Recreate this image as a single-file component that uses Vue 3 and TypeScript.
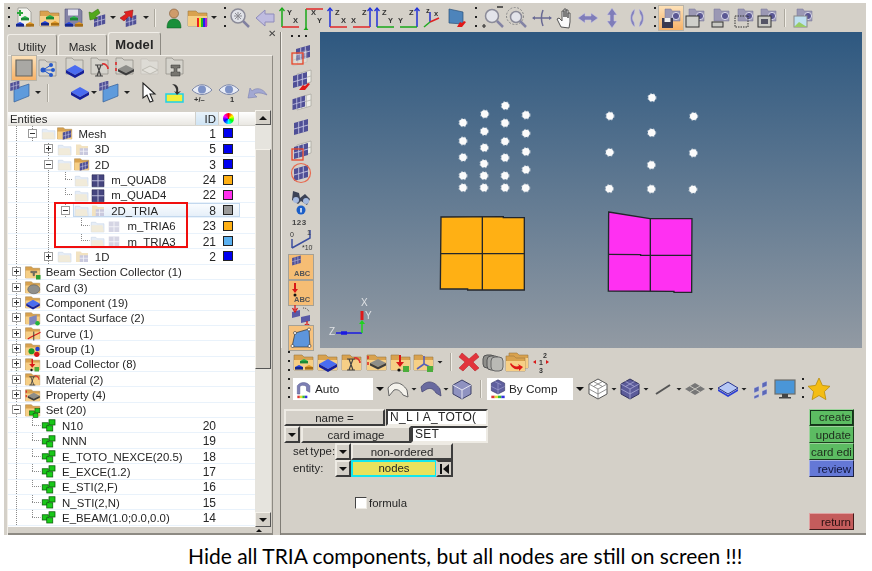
<template>
  <svg class="defs" aria-hidden="true">
    <defs>
      <g id="g-fold">
        <path d="M2 5h8l2 2h9v13H2z" fill="#d9a24e" stroke="#9c7a44" stroke-width=".6" />
        <path d="M2 10h19v10H2z" fill="#f6cf86" />
      </g>
      <g id="g-faint">
        <path d="M3 7h6l2 2h9v11H3z" fill="#e6edf6" stroke="#c3d2e6" stroke-width=".7" />
        <path d="M3 11h15l2 9H3z" fill="#f5e9cf" opacity=".7" />
      </g>
      <g id="g-cam">
        <path d="M6 3h6l1 2h8v10H6z" fill="#9b98b4" stroke="#77749a" stroke-width=".5" />
        <circle cx="17" cy="10" r="3.6" fill="#5b5894" stroke="#dbdaea" stroke-width="1" />
      </g>
      <g id="g-balls">
        <path d="M12 8l4 2-4 2-4-2z" fill="#29b34a" />
        <rect x="8" y="10" width="8" height="2.4" fill="#1b8a36" />
        <path d="M7 14l4 2-4 2-4-2z" fill="#2442d8" />
        <rect x="3" y="16" width="8" height="2.6" fill="#15288f" />
        <path d="M17 14l4 2-4 2-4-2z" fill="#e09a28" />
        <rect x="13" y="16" width="8" height="2.6" fill="#a86e14" />
      </g>
      <g id="g-grid">
        <path d="M5 8l14-4v12L5 20z" fill="#4f4f96" />
        <path d="M9.7 6.7v12M14.3 5.4v12M5 14l14-4" stroke="#c6c6e2" stroke-width=".9" fill="none" />
      </g>
      <g id="g-wire">
        <path d="M5 8l14-4v12L5 20z" fill="#efeee9" stroke="#a5a39c" stroke-width=".7" />
        <path d="M9.7 6.7v12M14.3 5.4v12M5 14l14-4" stroke="#b3b1ab" stroke-width=".8" fill="none" />
      </g>
      <g id="g-comp">
        <path d="M12 6l9 5-9 5-9-5z" fill="#4a6cf0" />
        <path d="M3 11l9 5 9-5v3l-9 5-9-5z" fill="#151f9a" />
      </g>
      <g id="g-prop">
        <path d="M13 9l8 4-8 4-8-4z" fill="#8e8e8a" />
        <path d="M5 13l8 4 8-4v2.5l-8 4-8-4z" fill="#3d3d3d" />
        <path d="M3 6v3M3 12v3" stroke="#d22" stroke-width="1.5" />
      </g>
      <g id="g-mat">
        <path d="M14 8a5 5 0 0 1 6 5" fill="none" stroke="#d33" stroke-width="1.6" />
        <path d="M7 9h8M7 20h8M9 9l4 11M13 9l-4 11" stroke="#444" stroke-width="1.2" fill="none" />
      </g>
      <g id="g-load">
        <path d="M11 5v9" stroke="#d81818" stroke-width="2" />
        <path d="M7 12h8l-4 5z" fill="#d81818" />
        <circle cx="10" cy="20" r="1.6" fill="#111" />
        <rect x="14" y="16" width="6" height="6" fill="#4cad3c" />
      </g>
      <g id="g-set">
        <rect x="3" y="9" width="8" height="7" fill="#19c719" stroke="#0a5c0a" />
        <rect x="12" y="5" width="8" height="7" fill="#19c719" stroke="#0a5c0a" />
        <rect x="9" y="13" width="8" height="7" fill="#19d019" stroke="#0a5c0a" />
      </g>

      <symbol id="new" viewBox="0 0 24 24"><path d="M5 2h9l4 4v14H5z" fill="#f4f4ef" stroke="#8a8a84" stroke-width=".7" /><path d="M4 7h6M7 4v6" stroke="#2aa83a" stroke-width="2" /><use href="#g-balls" y="2" /></symbol>
      <symbol id="open" viewBox="0 0 24 24"><use href="#g-fold" /><use href="#g-balls" y="1" /></symbol>
      <symbol id="save" viewBox="0 0 24 24"><path d="M3 3h15l2 2v15H3z" fill="#8483a6" stroke="#55547c" stroke-width=".6" /><rect x="6" y="3.500" width="10" height="6" fill="#e4e4ee" /><use href="#g-balls" y="2" /></symbol>
      <symbol id="imp" viewBox="0 0 24 24"><use href="#g-grid" transform="translate(5 5) scale(.8)" /><path d="M13 3l-6 4-3-1 1 8 8-2-3-1 5-4z" fill="#52a81c" stroke="#2f6d0c" stroke-width=".5" /></symbol>
      <symbol id="exp" viewBox="0 0 24 24"><use href="#g-grid" transform="translate(6 6) scale(.75)" /><path d="M4 12l6-4-2-2 9-2-1 8-3-2-5 5z" fill="#e02121" stroke="#8d1010" stroke-width=".5" /></symbol>
      <symbol id="user" viewBox="0 0 24 24"><circle cx="12" cy="7.500" r="4.500" fill="#cf9b6a" stroke="#7a5430" stroke-width=".6" /><path d="M5 22c0-7 3-9 7-9s7 2 7 9z" fill="#1a8f3a" stroke="#0c5a20" stroke-width=".5" /></symbol>
      <symbol id="rainb" viewBox="0 0 24 24"><use href="#g-fold" /><path d="M11 12h2v9h-2z" fill="#e22" /><path d="M13 12h2v9h-2z" fill="#ee2" /><path d="M15 12h2v9h-2z" fill="#2b2" /><path d="M17 12h2v9h-2z" fill="#22e" /><path d="M19 12h2v9h-2z" fill="#a2c" /></symbol>
      <symbol id="zwheel" viewBox="0 0 24 24"><circle cx="10" cy="10" r="7" fill="#e0e2e8" stroke="#8b8b98" stroke-width="1.500" /><path d="M15 15l6 6" stroke="#8080a0" stroke-width="2.500" /><path d="M7 7l6 6M13 7l-6 6M10 6v8M6 10h8" stroke="#8d8d94" stroke-width="1" /></symbol>
      <symbol id="larr" viewBox="0 0 24 24"><path d="M3 12l9-8v4h9v8h-9v4z" fill="#bfbce0" stroke="#8f8cba" stroke-width="1" /></symbol>
      <symbol v-for="a in axes" :id="a.id" :key="a.id" viewBox="0 0 24 24">
        <path :d="`M${a.vx} ${a.hy}V${a.vEnd}`" :stroke="a.vc" stroke-width="1.500" />
        <path :d="`M${a.vx - 2.500} ${a.vEnd + 3}L${a.vx} ${a.vEnd}L${a.vx + 2.500} ${a.vEnd + 3}`" :stroke="a.vc" stroke-width="1.200" fill="none" />
        <path :d="`M${a.vx} ${a.hy}H${a.hEnd}`" :stroke="a.hc" stroke-width="1.500" />
        <text :x="a.vx === 4 ? 9 : 12" y="9" class="ax">{{ a.vl }}</text>
        <text :x="a.vx === 4 ? 15 : 1" y="17" class="ax">{{ a.hl }}</text>
      </symbol>
      <symbol id="iso" viewBox="0 0 24 24"><path d="M9 16V6" stroke="#2430d0" stroke-width="1.500" /><path d="M9 16l9-4" stroke="#d22" stroke-width="1.500" /><path d="M9 16l-6 5" stroke="#2a2" stroke-width="1.500" /><text x="5" y="7" class="ax">z</text><text x="13" y="10" class="ax">x</text></symbol>
      <symbol id="scr" viewBox="0 0 24 24"><path d="M4 3l14 3v12L4 17z" fill="#4d84bb" stroke="#2d527a" stroke-width=".7" /><path d="M12 21l5 0 4-5-2-1-2 2-2-1z" fill="#e01818" /></symbol>
      <symbol id="zoomo" viewBox="0 0 24 24"><circle cx="11" cy="10" r="6.500" fill="#e3e4ea" stroke="#8b8b98" stroke-width="1.500" /><path d="M16 15l6 6" stroke="#8383a4" stroke-width="2.500" /><path d="M16 1h6" stroke="#333" stroke-width="1.500" /><path d="M1 20h4M3 18v4" stroke="#333" stroke-width="1.200" /></symbol>
      <symbol id="zoomd" viewBox="0 0 24 24"><circle cx="10" cy="10" r="8.500" fill="none" stroke="#888" stroke-width="1" stroke-dasharray="2 1.500" /><circle cx="11" cy="11" r="5.500" fill="#e3e4ea" stroke="#8b8b98" stroke-width="1.500" /><path d="M15 15l6 6" stroke="#8383a4" stroke-width="2.500" /></symbol>
      <symbol id="fit" viewBox="0 0 24 24"><path d="M3 12h18M13 4c-2 5-2 11 0 16" stroke="#6a6a94" stroke-width="1.500" fill="none" /><path d="M2 12l3-2v4zM22 12l-3-2v4z" fill="#6a6a94" /></symbol>
      <symbol id="hand" viewBox="0 0 24 24"><path d="M8 21l-4-8 2-1 3 3V5h2v6-8h2v8-7h2v8-5h2v9l-1 6z" fill="#fafafa" stroke="#555" stroke-width="1" stroke-linejoin="round" /></symbol>
      <symbol id="harr" viewBox="0 0 24 24"><path d="M2 12l7-5v3h6V7l7 5-7 5v-3H9v3z" fill="#7f7db9" stroke="#c9c8e2" stroke-width=".6" /></symbol>
      <symbol id="varr" viewBox="0 0 24 24"><path d="M12 2l5 7h-3v6h3l-5 7-5-7h3V9H7z" fill="#7f7db9" stroke="#c9c8e2" stroke-width=".6" /></symbol>
      <symbol id="rot" viewBox="0 0 24 24"><path d="M10 3C4 6 4 18 10 21l-1-5c-2-2-2-6 0-8zM14 3c6 3 6 15 0 18l1-5c2-2 2-6 0-8z" fill="#8280bd" stroke="#c9c8e2" stroke-width=".5" /></symbol>
      <symbol id="cam1" viewBox="0 0 24 24"><use href="#g-cam" /><rect x="3" y="12" width="11" height="10" fill="#3a3a50" /><rect x="5.500" y="12" width="6" height="4" fill="#eee" /></symbol>
      <symbol id="cam2" viewBox="0 0 24 24"><use href="#g-cam" /><rect x="3" y="10" width="13" height="11" fill="#cfcfca" stroke="#333" stroke-width="1" /></symbol>
      <symbol id="cam3" viewBox="0 0 24 24"><use href="#g-cam" /><rect x="4" y="16" width="11" height="5" fill="#c9c9c3" stroke="#333" stroke-width="1" /></symbol>
      <symbol id="cam4" viewBox="0 0 24 24"><use href="#g-cam" /><rect x="3" y="10" width="13" height="11" fill="none" stroke="#333" stroke-width="1" stroke-dasharray="1.500 1" /></symbol>
      <symbol id="cam5" viewBox="0 0 24 24"><use href="#g-cam" /><rect x="3" y="10" width="13" height="11" fill="#c9c9c3" stroke="#333" stroke-width="1" /><rect x="6" y="13" width="7" height="5" fill="#556" /></symbol>
      <symbol id="cam6" viewBox="0 0 24 24"><use href="#g-cam" /><rect x="3" y="10" width="13" height="11" fill="#bfe0f0" stroke="#888" stroke-width="1" /><path d="M3 21l5-5 8 5z" fill="#9c6" /></symbol>

      <symbol id="pfold" viewBox="0 0 24 24"><path d="M4 4h16v16H4z" fill="#a9a8a4" stroke="#66655f" stroke-width="1.200" /></symbol>
      <symbol id="pnet" viewBox="0 0 24 24"><path d="M3 4h6l2 2h9v14H3z" fill="#d5d3cc" stroke="#8c8a82" stroke-width=".7" /><path d="M7 14l8-5M7 14l9 0M7 14l8 5" stroke="#2659c9" stroke-width="1" /><circle cx="7" cy="14" r="2.500" fill="#2659c9" /><circle cx="15" cy="9" r="2" fill="#2659c9" /><circle cx="17" cy="14" r="2" fill="#2659c9" /><circle cx="15" cy="19" r="2" fill="#2659c9" /></symbol>
      <symbol id="pcomp" viewBox="0 0 24 24"><path d="M3 2h6l2 2h9v14H3z" fill="#d5d3cc" stroke="#8c8a82" stroke-width=".7" /><use href="#g-comp" y="3" /></symbol>
      <symbol id="pmat" viewBox="0 0 24 24"><path d="M3 2h6l2 2h9v14H3z" fill="#d5d3cc" stroke="#8c8a82" stroke-width=".7" /><use href="#g-mat" /></symbol>
      <symbol id="pprop" viewBox="0 0 24 24"><path d="M3 2h6l2 2h9v14H3z" fill="#d5d3cc" stroke="#8c8a82" stroke-width=".7" /><use href="#g-prop" /></symbol>
      <symbol id="pdis" viewBox="0 0 24 24"><path d="M3 3h6l2 2h9v13H3z" fill="#dddbd5" stroke="#c4c2ba" stroke-width=".7" /><path d="M12 10l8 4-8 4-8-4z" fill="#e4e2dc" stroke="#bdbbb3" /></symbol>
      <symbol id="pbeam" viewBox="0 0 24 24"><path d="M3 2h6l2 2h9v14H3z" fill="#d5d3cc" stroke="#8c8a82" stroke-width=".7" /><path d="M8 9h9v3h-3v4h3v4H8v-4h3v-4H8z" fill="#77756f" stroke="#333" stroke-width=".5" /></symbol>
      <symbol id="psheet" viewBox="0 0 24 24"><path d="M4 8l15-5v12L4 21z" fill="#5f9bdc" stroke="#345e98" stroke-width=".7" /><use href="#g-grid" transform="translate(-3 -3) scale(.65)" /></symbol>
      <symbol id="comp" viewBox="0 0 24 24"><use href="#g-comp" /></symbol>
      <symbol id="cursor" viewBox="0 0 24 24"><path d="M7 2v15l4-3 3 7 3-1-3-7h5z" fill="#fff" stroke="#222" stroke-width="1.100" /></symbol>
      <symbol id="ybox" viewBox="0 0 24 24"><rect x="3" y="13" width="17" height="8" fill="#f4ef3a" stroke="#1fd0e6" stroke-width="1.500" /><path d="M9 3c5 0 7 3 6 8l3-1-4 4-3-4 2 1c1-3-1-6-4-8z" fill="#333" /></symbol>
      <symbol id="eyep" viewBox="0 0 24 24"><path d="M2 9c6-7 14-7 20 0-6 6-14 6-20 0z" fill="#e8ecf5" stroke="#7e88a8" stroke-width="1" /><circle cx="12" cy="8.500" r="4" fill="#7d92c6" /><text x="4" y="21" class="ax">+/–</text></symbol>
      <symbol id="eye1" viewBox="0 0 24 24"><path d="M2 9c6-7 14-7 20 0-6 6-14 6-20 0z" fill="#e8ecf5" stroke="#7e88a8" stroke-width="1" /><circle cx="12" cy="8.500" r="4" fill="#7d92c6" /><text x="13" y="21" class="ax">1</text></symbol>
      <symbol id="undo" viewBox="0 0 24 24"><path d="M22 14C18 7 11 6 7 10l-2-3-2 10 9-1-3-3c4-2 8-1 13 1z" fill="#a2a8d2" stroke="#7c82b0" stroke-width=".6" /></symbol>

      <symbol id="gbox" viewBox="0 0 24 24"><use href="#g-grid" transform="translate(2 -2)" /><use href="#g-wire" opacity=".4" transform="translate(-1 3)" /><rect x="3" y="10" width="11" height="11" fill="none" stroke="#e8462a" stroke-width="1.300" /></symbol>
      <symbol id="gred" viewBox="0 0 24 24"><use href="#g-wire" transform="translate(3 -2)" /><use href="#g-grid" transform="translate(-1 0)" /><path d="M10 22l6 0 5-6-2-1-3 3-2-1z" fill="#e01818" /></symbol>
      <symbol id="gwire" viewBox="0 0 24 24"><use href="#g-wire" transform="translate(3 -1)" /><use href="#g-grid" transform="translate(-1 1) scale(.9)" /></symbol>
      <symbol id="grid" viewBox="0 0 24 24"><use href="#g-grid" /></symbol>
      <symbol id="gbox2" viewBox="0 0 24 24"><use href="#g-wire" transform="translate(3 -2)" /><use href="#g-grid" /><rect x="3" y="10" width="11" height="11" fill="none" stroke="#e8462a" stroke-width="1.300" /></symbol>
      <symbol id="gcirc" viewBox="0 0 24 24"><use href="#g-grid" /><circle cx="12" cy="12" r="9.500" fill="none" stroke="#e86a50" stroke-width="1.200" /></symbol>
      <symbol id="binoc" viewBox="0 0 24 24"><path d="M4 6l6 2 1 5 5-4 5 5-3 6-6-4-3 3-6-4z" fill="#3b4256" /><circle cx="7" cy="15" r="3" fill="#a7bbe0" /><circle cx="17" cy="16" r="3" fill="#a7bbe0" /></symbol>
      <symbol id="info" viewBox="0 0 24 24"><circle cx="12" cy="6" r="4.500" fill="#1b5ec8" /><rect x="11.300" y="4" width="1.400" height="4.500" fill="#fff" /><text x="3" y="21" class="num">123</text></symbol>
      <symbol id="angle" viewBox="0 0 24 24"><path d="M3 20L21 10V2M3 20V11" stroke="#3c4fa0" stroke-width="1.500" fill="none" /><text x="1" y="9" class="tiny">0</text><text x="18" y="7" class="tiny">1</text><text x="13" y="22" class="tiny">*10'</text></symbol>
      <symbol id="abc1" viewBox="0 0 24 24"><rect width="24" height="24" fill="#f6bd74" /><use href="#g-grid" transform="translate(0 -2) scale(.62)" /><text x="5" y="21" class="abc">ABC</text></symbol>
      <symbol id="abc2" viewBox="0 0 24 24"><rect width="24" height="24" fill="#f6bd74" /><path d="M6 2v9" stroke="#d81818" stroke-width="2" /><path d="M3 8h6l-3 4z" fill="#d81818" /><circle cx="6" cy="14" r="1.500" fill="#111" /><text x="5" y="21" class="abc">ABC</text></symbol>
      <symbol id="swap" viewBox="0 0 24 24"><path d="M3 8l8-2v6l-8 2z" fill="#5a5aa6" /><path d="M12 13l9-2v6l-9 2z" fill="#5a5aa6" /><path d="M6 1v5M3.500 4L6 8l2.500-4M18 17v6M16 20l2 3 2-3" stroke="#d81818" stroke-width="1.300" fill="none" /><path d="M14 4c3 0 5 1 6 4" stroke="#555" fill="none" stroke-dasharray="1 1" /></symbol>
      <symbol id="quad" viewBox="0 0 24 24"><rect width="24" height="24" fill="#f7c27d" /><path d="M3 21L6 7l14-4 1 18z" fill="#5d95dc" stroke="#333" stroke-width=".7" /><circle cx="6" cy="7" r="1.500" fill="#fff" stroke="#333" stroke-width=".6" /><circle cx="20" cy="3.500" r="1.500" fill="#fff" stroke="#333" stroke-width=".6" /><circle cx="3.500" cy="20" r="1.500" fill="#fff" stroke="#333" stroke-width=".6" /><circle cx="20.500" cy="20" r="1.500" fill="#fff" stroke="#333" stroke-width=".6" /></symbol>

      <symbol id="fcomp" viewBox="0 0 24 24"><use href="#g-fold" /><use href="#g-comp" y="3" /></symbol>
      <symbol id="fmat" viewBox="0 0 24 24"><use href="#g-fold" /><use href="#g-mat" /></symbol>
      <symbol id="fprop" viewBox="0 0 24 24"><use href="#g-fold" /><use href="#g-prop" /></symbol>
      <symbol id="fload" viewBox="0 0 24 24"><use href="#g-fold" /><use href="#g-load" /></symbol>
      <symbol id="faxes" viewBox="0 0 24 24"><use href="#g-fold" /><path d="M12 14V6M12 14l-7 5M12 14l6 3" stroke="#5860b8" stroke-width="1.600" /><rect x="15" y="16" width="6" height="6" fill="#4cad3c" /></symbol>
      <symbol id="xred" viewBox="0 0 24 24"><path d="M5 3l7 6 7-6 3 4-6 5 6 6-4 3-6-6-6 6-4-3 6-6-6-5z" fill="#e2343c" stroke="#b01a20" stroke-width=".5" /></symbol>
      <symbol id="cards" viewBox="0 0 24 24"><rect x="2" y="5" width="12" height="13" rx="4" fill="#8f8f8b" stroke="#555" /><rect x="6" y="6" width="12" height="14" rx="4" fill="#a9a9a5" stroke="#555" /><rect x="10" y="7" width="12" height="14" rx="4" fill="#b9b9b5" stroke="#666" /></symbol>
      <symbol id="fred" viewBox="0 0 24 24"><use href="#g-fold" transform="translate(2 -2)" /><use href="#g-fold" transform="translate(-1 1)" /><path d="M6 13c2 3 5 4 8 3l-1-2 5 3-4 4v-2c-4 1-7-1-9-5z" fill="#e01818" /></symbol>
      <symbol id="numb" viewBox="0 0 24 24"><text x="14" y="8" class="tiny b">2</text><text x="10" y="15" class="tiny b">1</text><text x="10" y="23" class="tiny b">3</text><path d="M4 12l3-2v4zM20 12l-3-2v4z" fill="#d81818" /></symbol>

      <symbol id="autoi" viewBox="0 0 24 24"><path d="M4 18V8c4-5 11-5 15 0v8l-4-2V9c-3-2-6-2-8 0v9z" fill="#7e80b4" stroke="#4f5088" stroke-width=".6" /><path d="M4 20h3v3H4z" fill="#d33" /><path d="M7 20h3v3H7z" fill="#dd3" /><path d="M10 20h3v3h-3z" fill="#3b3" /><path d="M13 20h3v3h-3z" fill="#33d" /></symbol>
      <symbol id="shapeo" viewBox="0 0 24 24"><path d="M3 19l-1-8c5-7 13-7 19 2l1 7-5-2c-3-5-6-6-9-5z" fill="#f4f2ec" stroke="#666" stroke-width="1" /></symbol>
      <symbol id="shapef" viewBox="0 0 24 24"><path d="M3 15l-1-5c5-7 13-7 19 2l1 7-5-3c-3-5-6-5-9-4z" fill="#696a9f" stroke="#3f4070" stroke-width=".7" /></symbol>
      <symbol id="box" viewBox="0 0 24 24"><path d="M12 3l9 5v9l-9 5-9-5V8z" fill="#8f92c0" stroke="#3d4068" stroke-width="1" /><path d="M12 13L3 8M12 13l9-5M12 13v9" stroke="#e4e4f0" stroke-width="1" /></symbol>
      <symbol id="byi" viewBox="0 0 24 24"><path d="M12 1l8 4v9l-8 4-8-4V5z" fill="#5f5f9e" stroke="#33335e" stroke-width=".7" /><path d="M4 9l8 4 8-4M12 5v13M8 3l8 4" stroke="#a2a2d0" stroke-width=".8" fill="none" /><path d="M4 20h4v3H4z" fill="#d33" /><path d="M8 20h4v3H8z" fill="#dd3" /><path d="M12 20h4v3h-4z" fill="#3b3" /><path d="M16 20h4v3h-4z" fill="#33d" /></symbol>
      <symbol id="rubw" viewBox="0 0 24 24"><path d="M12 2l9 5v10l-9 5-9-5V7z" fill="#fff" stroke="#555" stroke-width="1" /><path d="M3 7l9 5 9-5M12 12v10M7.500 4.500l9 5M16.500 4.500l-9 5M3 12l9 5 9-5" stroke="#777" stroke-width=".8" fill="none" /></symbol>
      <symbol id="rub" viewBox="0 0 24 24"><path d="M12 2l9 5v10l-9 5-9-5V7z" fill="#5b5b99" stroke="#33335e" stroke-width="1" /><path d="M3 7l9 5 9-5M12 12v10M7.500 4.500l9 5M16.500 4.500l-9 5M3 12l9 5 9-5" stroke="#a9a9d6" stroke-width=".8" fill="none" /></symbol>
      <symbol id="line" viewBox="0 0 24 24"><path d="M5 17L19 8" stroke="#555" stroke-width="2" /></symbol>
      <symbol id="flat" viewBox="0 0 24 24"><path d="M12 6l10 6-10 6-10-6z" fill="#777" /><path d="M7 9l10 6M17 9L7 15" stroke="#c9c7c0" stroke-width="1" /></symbol>
      <symbol id="comp2" viewBox="0 0 24 24"><path d="M12 5l10 6-10 6-10-6z" fill="#b7c8f4" stroke="#28348f" stroke-width="1" /><path d="M2 12l10 6 10-6v2l-10 6-10-6z" fill="#2c3fd6" /></symbol>
      <symbol id="quads" viewBox="0 0 24 24"><path d="M5 11l5-2v5l-5 2zM13 6l5-2v5l-5 2zM5 19l5-2v3l-5 2zM13 14l5-2v5l-5 2z" fill="#5b68b8" stroke="#d5d4e6" stroke-width=".5" /></symbol>
      <symbol id="mon" viewBox="0 0 24 24"><rect x="2" y="3" width="20" height="14" fill="#4a96d8" stroke="#6e6e6a" stroke-width="1.200" /><path d="M9 17h6v3H9zM6 20h12v1.500H6z" fill="#444" /></symbol>
      <symbol id="star" viewBox="0 0 24 24"><path d="M12 1l3.400 7.400 7.600.9-5.600 5.300 1.500 8L12 18.500l-6.900 4.100 1.500-8L1 9.300l7.600-.9z" fill="#f4bd14" stroke="#b88b0a" stroke-width=".8" /></symbol>

      <symbol id="faint" viewBox="0 0 24 24"><use href="#g-faint" /></symbol>
      <symbol id="meshf" viewBox="0 0 24 24"><use href="#g-fold" /><use href="#g-grid" transform="translate(5 5) scale(.8)" /></symbol>
      <symbol id="gridpf" viewBox="0 0 24 24"><path d="M4 6h6l2 2h8v12H4z" fill="#f2e2c0" /><path d="M9 11h11v9H9z" fill="#c9c9de" /><path d="M14 11v9M9 15h11" stroke="#f4f4f8" stroke-width="1" /></symbol>
      <symbol id="gridd" viewBox="0 0 24 24"><path d="M4 5h16v16H4z" fill="#45457f" stroke="#24244c" stroke-width=".7" /><path d="M12 5v16M4 13h16" stroke="#c5c5e0" stroke-width="1.200" /></symbol>
      <symbol id="gridp" viewBox="0 0 24 24"><path d="M5 6h14v14H5z" fill="#d5d5e4" /><path d="M12 6v14M5 13h14" stroke="#f4f4f8" stroke-width="1.200" /></symbol>
      <symbol id="beamf" viewBox="0 0 24 24"><use href="#g-fold" /><path d="M9 11h8v2h-3v4h-2v-4H9z" fill="#77756f" stroke="#333" stroke-width=".5" /><rect x="16" y="16" width="6" height="6" fill="#2e9e32" /></symbol>
      <symbol id="cardf" viewBox="0 0 24 24"><use href="#g-fold" /><ellipse cx="13" cy="15" rx="8" ry="6" fill="#8f8f8b" stroke="#555" stroke-width=".7" /></symbol>
      <symbol id="contf" viewBox="0 0 24 24"><use href="#g-fold" /><path d="M7 11l10-3v11L7 22z" fill="#7f86bd" /><circle cx="18" cy="19" r="3" fill="#22b53c" /></symbol>
      <symbol id="curvef" viewBox="0 0 24 24"><use href="#g-fold" /><path d="M5 20C9 17 15 15 22 11" stroke="#d81818" stroke-width="1.500" fill="none" /><path d="M13 10v12" stroke="#333" stroke-width="1.200" /></symbol>
      <symbol id="groupf" viewBox="0 0 24 24"><use href="#g-fold" /><circle cx="10" cy="15" r="4" fill="#1f9c28" /><circle cx="18" cy="12" r="3" fill="#2342cc" /><circle cx="17" cy="19" r="3.500" fill="#d81818" /></symbol>
      <symbol id="setf" viewBox="0 0 24 24"><use href="#g-fold" /><use href="#g-set" transform="translate(5 6) scale(.8)" /></symbol>
      <symbol id="set" viewBox="0 0 24 24"><use href="#g-set" /></symbol>
      <symbol id="plus" viewBox="0 0 9 9"><rect x=".5" y=".5" width="8" height="8" fill="#fff" stroke="#9a9a9a" /><path d="M2 4.500h5M4.500 2v5" stroke="#333" /></symbol>
      <symbol id="minus" viewBox="0 0 9 9"><rect x=".5" y=".5" width="8" height="8" fill="#fff" stroke="#9a9a9a" /><path d="M2 4.500h5" stroke="#333" /></symbol>
    </defs>
  </svg>

  <div class="window">
    <div class="bar top-bar">
      <template v-for="t in topTools" :key="t.key">
        <span :class="['tool', t.kind, { on: t.on }]" :style="{ marginLeft: t.ml + 'px' }">
          <svg v-if="t.kind === 'ico'"><use :href="'#' + t.name" /></svg>
        </span>
      </template>
    </div>

    <div class="main">
      <aside class="side">
        <div class="tabs">
          <span class="tab tab-u">Utility</span>
          <span class="tab tab-m">Mask</span>
          <span class="tab tab-active">Model</span>
          <span class="close">✕</span>
        </div>
        <div class="panel">
          <div class="bar panel-bar">
            <span v-for="t in panelTools1" :key="t.key" :class="['tool', t.kind, { on: t.on }]" :style="{ marginLeft: t.ml + 'px' }">
              <svg v-if="t.kind === 'ico'"><use :href="'#' + t.name" /></svg>
            </span>
          </div>
          <div class="bar panel-bar second">
            <span v-for="t in panelTools2" :key="t.key" :class="['tool', t.kind]" :style="{ marginLeft: t.ml + 'px' }">
              <svg v-if="t.kind === 'ico'"><use :href="'#' + t.name" /></svg>
            </span>
          </div>

          <div class="browser">
            <div class="tree">
              <div class="tree-head">
                <span class="h-name">Entities</span>
                <span class="h-id">ID</span>
                <span class="h-col"><i class="wheel"></i></span>
                <span class="h-end"></span>
              </div>
              <div v-for="r in rows" :key="r.label" class="row">
                <span v-for="(c, i) in r.cells.split('')" :key="i" :class="['c', cellClass(c)]">
                  <svg v-if="c === '+' || c === '-'" class="exp"><use :href="c === '+' ? '#plus' : '#minus'" /></svg>
                </span>
                <div :class="['body', { sel: r.sel }]">
                  <span v-for="ic in r.icons" :key="ic" class="c">
                    <svg class="node-ico"><use :href="'#' + ic" /></svg>
                  </span>
                  <span class="label">{{ r.label }}</span>
                  <span class="id">{{ r.id }}</span>
                  <span class="sw-cell"><i v-if="r.color" class="swatch" :style="{ background: r.color }"></i></span>
                </div>
              </div>
              <div class="callout"></div>
            </div>
            <div class="scroll">
              <span class="sb-btn"><i class="tri up"></i></span>
              <span class="sb-track first"></span>
              <span class="sb-thumb"></span>
              <span class="sb-track"></span>
              <span class="sb-btn"><i class="tri"></i></span>
            </div>
          </div>
          <div class="grab"><i class="tri up small"></i></div>
        </div>
      </aside>

      <section class="work">
        <div class="upper">
          <div class="v-bar">
            <span class="h-grip"></span>
            <span v-for="t in leftTools" :key="t.key" :class="['tool', 'ico', { framed: t.framed }]" :style="{ marginTop: t.ml + 'px' }">
              <svg><use :href="'#' + t.name" /></svg>
            </span>
          </div>
          <div class="view">
            <svg class="scene" width="542" height="316">
              <g transform="translate(110 53) scale(.3333)">
                <path d="M33 396L220 395V398H283V615H113V612H31Z" fill="#ffb014" stroke="#23262b" stroke-width="4" />
                <path d="M157 396V615M32 506H283" stroke="#23262b" stroke-width="4" fill="none" />
                <path d="M536 381L660 401H786L785 622H732V619L535 618Z" fill="#ff30f2" stroke="#23262b" stroke-width="4" />
                <path d="M661 401V619M535 508L632 509V511H786" stroke="#23262b" stroke-width="4" fill="none" />
                <circle v-for="(n, i) in nodes" :key="i" :cx="n[0]" :cy="n[1]" r="11" fill="#fbfbfb" stroke="#fff" stroke-opacity=".45" stroke-width="6" stroke-dasharray="5 4" />
              </g>
              <g transform="translate(-320 -32)">
                <path d="M362 333H336" stroke="#1a1ae0" stroke-width="1.500" />
                <path d="M347 333h-6" stroke="#1a1ae0" stroke-width="3.500" />
                <path d="M362 333V322" stroke="#1ed41e" stroke-width="1.500" />
                <path d="M359 324l3-4 3 4z" fill="#1ed41e" />
                <path d="M362 320V311" stroke="#e01818" stroke-width="3" />
                <text x="361" y="306" class="tri-l">X</text>
                <text x="365" y="319" class="tri-l">Y</text>
                <text x="329" y="335" class="tri-l">Z</text>
              </g>
            </svg>
          </div>
        </div>

        <div class="lower">
          <div class="bar low-bar">
            <span v-for="t in lowTools" :key="t.key" :class="['tool', t.kind]" :style="{ marginLeft: t.ml + 'px' }">
              <svg v-if="t.kind === 'ico'"><use :href="'#' + t.name" /></svg>
            </span>
          </div>

          <div class="bar style-bar">
            <span class="tool grip style-grip"></span>
            <div class="select sel-auto">
              <svg class="sel-ico"><use href="#autoi" /></svg>
              <span class="sel-text">Auto</span>
              <span class="sel-btn"><i class="tri"></i></span>
            </div>
            <span v-for="t in styleTools1" :key="t.key" :class="['tool', t.kind]" :style="{ marginLeft: t.ml + 'px' }">
              <svg v-if="t.kind === 'ico'"><use :href="'#' + t.name" /></svg>
            </span>
            <div class="select sel-comp">
              <svg class="sel-ico"><use href="#byi" /></svg>
              <span class="sel-text">By Comp</span>
              <span class="sel-btn"><i class="tri"></i></span>
            </div>
            <span v-for="t in styleTools2" :key="t.key" :class="['tool', t.kind]" :style="{ marginLeft: t.ml + 'px' }">
              <svg v-if="t.kind === 'ico'"><use :href="'#' + t.name" /></svg>
            </span>
          </div>

          <div class="forms">
            <div class="form">
              <div class="f-row">
                <button class="btn w-name">name =</button>
                <span class="field w-f1">N_L I A_TOTO(</span>
              </div>
              <div class="f-row">
                <button class="btn arrow"><i class="tri"></i></button>
                <button class="btn w-card">card image</button>
                <span class="field w-f2">SET</span>
              </div>
              <div class="f-row">
                <span class="f-label">set type:</span>
                <button class="btn arrow"><i class="tri"></i></button>
                <button class="btn w-type">non-ordered</button>
              </div>
              <div class="f-row">
                <span class="f-label">entity:</span>
                <button class="btn arrow"><i class="tri"></i></button>
                <span class="nodes">nodes</span>
                <button class="btn skip"><i class="bar-l"></i><i class="tri left"></i></button>
              </div>
              <label class="formula"><span class="check"></span>formula</label>
            </div>
            <div class="actions">
              <button class="act green create"><span>create</span></button>
              <button class="act green">update</button>
              <button class="act green clip">card edi</button>
              <button class="act blue">review</button>
              <button class="act red">return</button>
            </div>
          </div>
        </div>
      </section>
    </div>
  </div>
  <p class="caption">Hide all TRIA components, but all nodes are still on screen !!!</p>
</template>

<script setup lang="ts">
interface Tool {
  key: string
  name: string
  kind: string
  ml: number
  on?: boolean
  framed?: boolean
}

interface Row {
  cells: string
  icons: string[]
  label: string
  id?: number
  color?: string
  sel?: boolean
}

const BLUE = '#0000f0'
const ORANGE = '#ffb014'

// every entry is [name, centre]; the margin is worked out from the previous item
const place = (start: number, list: [string, number, boolean?][]): Tool[] => {
  let end = start
  return list.map(([name, cx, on], i) => {
    const kind = name === '|' ? 'sep' : name === ':' ? 'grip' : name === 'v' ? 'caret' : 'ico'
    const w = kind === 'ico' ? 24 : kind === 'caret' ? 6 : 2
    const ml = cx - w / 2 - end
    end = cx + w / 2
    return { key: `${name}${i}`, name, kind, ml, on }
  })
}

const topTools = place(4, [
  [':', 9], ['new', 25], ['open', 50], ['save', 74], ['imp', 97], ['v', 113], ['exp', 128], ['v', 146], ['|', 155],
  ['user', 174], ['rainb', 198], ['v', 214], [':', 225], ['zwheel', 240], ['larr', 265],
  ['ax1', 290], ['ax2', 314], ['ax3', 338], ['ax4', 362], ['ax5', 385], ['ax6', 409], ['iso', 433], ['scr', 457],
  [':', 476], ['zoomo', 493], ['zoomd', 517], ['fit', 542], ['hand', 565], ['harr', 588], ['varr', 612], ['rot', 637],
  [':', 655], ['cam1', 671, true], ['cam2', 695], ['cam3', 720], ['cam4', 744], ['cam5', 767], ['|', 785], ['cam6', 803]
])

const panelTools1 = place(8, [
  ['pfold', 24, true], ['pnet', 48], ['pcomp', 75], ['pmat', 100], ['pprop', 125], ['pdis', 150], ['pbeam', 175]
])

const panelTools2 = place(8, [
  ['psheet', 22], ['v', 38], ['|', 48], ['comp', 80], ['v', 94], ['psheet', 111], ['v', 127],
  ['cursor', 148], ['ybox', 175], ['eyep', 202], ['eye1', 229], ['undo', 257]
])

const leftNames: [string, number][] = [
  ['gbox', 55], ['gred', 80], ['gwire', 103], ['grid', 127], ['gbox2', 151], ['gcirc', 173], ['binoc', 197],
  ['info', 216], ['angle', 240], ['abc1', 267], ['abc2', 293], ['swap', 316], ['quad', 338]
]

const leftTools: Tool[] = leftNames.map(([name, cy], i) => {
  const prevEnd = i === 0 ? 40 : leftNames[i - 1][1] + 12
  return { key: name, name, kind: 'ico', ml: cy - 12 - prevEnd, framed: name === 'abc1' || name === 'abc2' || name === 'quad' }
})

const lowTools = place(281, [
  [':', 289], ['open', 304], ['fcomp', 328], ['fmat', 352], ['fprop', 377], ['fload', 401], ['faxes', 424], ['v', 440], ['|', 451],
  ['xred', 469], ['cards', 493], ['fred', 517], ['numb', 541]
])

const styleTools1 = place(386, [
  ['shapeo', 398], ['v', 414], ['shapef', 431], ['v', 446], ['box', 462], ['|', 481]
])

const styleTools2 = place(586, [
  ['rubw', 598], ['v', 614], ['rub', 630], ['v', 646], ['line', 663], ['v', 679], ['flat', 695], ['v', 711],
  ['comp2', 728], ['v', 744], ['quads', 761], ['mon', 785], [':', 803], ['star', 819]
])

const axes = [
  { id: 'ax1', vx: 4, hy: 21, vEnd: 2, hEnd: 21, vc: '#18a818', hc: '#e22828', vl: 'Y', hl: 'X' },
  { id: 'ax2', vx: 4, hy: 3, vEnd: 22, hEnd: 21, vc: '#18a818', hc: '#e22828', vl: 'X', hl: 'Y' },
  { id: 'ax3', vx: 4, hy: 21, vEnd: 2, hEnd: 21, vc: '#2030d8', hc: '#e22828', vl: 'Z', hl: 'X' },
  { id: 'ax4', vx: 20, hy: 21, vEnd: 2, hEnd: 3, vc: '#2030d8', hc: '#e22828', vl: 'Z', hl: 'X' },
  { id: 'ax5', vx: 4, hy: 21, vEnd: 2, hEnd: 21, vc: '#2030d8', hc: '#18a818', vl: 'Z', hl: 'Y' },
  { id: 'ax6', vx: 20, hy: 21, vEnd: 2, hEnd: 3, vc: '#2030d8', hc: '#18a818', vl: 'Z', hl: 'Y' }
]

const rows: Row[] = [
  { cells: 'l-', icons: ['faint', 'meshf'], label: 'Mesh', id: 1, color: BLUE },
  { cells: 'l +', icons: ['faint', 'gridpf'], label: '3D', id: 5, color: BLUE },
  { cells: 'l -', icons: ['faint', 'meshf'], label: '2D', id: 3, color: BLUE },
  { cells: 'l le', icons: ['faint', 'gridd'], label: 'm_QUAD8', id: 24, color: ORANGE },
  { cells: 'l le', icons: ['faint', 'gridd'], label: 'm_QUAD4', id: 22, color: '#ff30ee' },
  { cells: 'l l-', icons: ['faint', 'gridpf'], label: '2D_TRIA', id: 8, color: '#999999', sel: true },
  { cells: 'l l e', icons: ['faint', 'gridp'], label: 'm_TRIA6', id: 23, color: ORANGE },
  { cells: 'l l e', icons: ['faint', 'gridp'], label: 'm_TRIA3', id: 21, color: '#5ab0f0' },
  { cells: 'l +', icons: ['faint', 'gridpf'], label: '1D', id: 2, color: BLUE },
  { cells: '+', icons: ['beamf'], label: 'Beam Section Collector (1)' },
  { cells: '+', icons: ['cardf'], label: 'Card (3)' },
  { cells: '+', icons: ['fcomp'], label: 'Component (19)' },
  { cells: '+', icons: ['contf'], label: 'Contact Surface (2)' },
  { cells: '+', icons: ['curvef'], label: 'Curve (1)' },
  { cells: '+', icons: ['groupf'], label: 'Group (1)' },
  { cells: '+', icons: ['fload'], label: 'Load Collector (8)' },
  { cells: '+', icons: ['fmat'], label: 'Material (2)' },
  { cells: '+', icons: ['fprop'], label: 'Property (4)' },
  { cells: '-', icons: ['setf'], label: 'Set (20)' },
  { cells: 'le', icons: ['set'], label: 'N10', id: 20 },
  { cells: 'le', icons: ['set'], label: 'NNN', id: 19 },
  { cells: 'le', icons: ['set'], label: 'E_TOTO_NEXCE(20.5)', id: 18 },
  { cells: 'le', icons: ['set'], label: 'E_EXCE(1.2)', id: 17 },
  { cells: 'le', icons: ['set'], label: 'E_STI(2,F)', id: 16 },
  { cells: 'le', icons: ['set'], label: 'N_STI(2,N)', id: 15 },
  { cells: 'le', icons: ['set'], label: 'E_BEAM(1.0;0.0,0.0)', id: 14 }
]

const nodes: [number, number][] = [
  [99, 113], [164, 87], [226, 62], [288, 90], [99, 168], [163, 139], [225, 114], [288, 145],
  [99, 217], [163, 188], [225, 169], [288, 200], [99, 272], [162, 236], [225, 218], [288, 254],
  [99, 308], [162, 272], [225, 272], [287, 309], [162, 308], [225, 308],
  [666, 38], [540, 93], [791, 94], [665, 143], [539, 202], [790, 204], [664, 240], [538, 311], [664, 312], [789, 313]
]

const cellClass = (c: string) => {
  if (c === 'l' || c === '+' || c === '-') return 'c-line'
  if (c === 'e') return 'c-elbow'
  return ''
}
</script>

<style>
html,
body {
  margin: 0;
  background: #fff;
}
</style>

<style scoped>
.defs {
  display: block;
  width: 0;
  height: 0;
}

.window {
  box-sizing: border-box;
  width: 862px;
  height: 532px;
  margin: 3px 0 0 4px;
  background: #d4d0c8;
  font: 11.400px "Liberation Sans", Arial, sans-serif;
  color: #262626;
  display: flex;
  flex-direction: column;
  filter: blur(0.4px);
}

.bar {
  display: flex;
  align-items: center;
}

.top-bar {
  height: 29px;
  flex: none;
}

.tool {
  flex: none;
  display: flex;
  align-items: center;
  justify-content: center;
}

.tool svg {
  width: 24px;
  height: 24px;
  flex: none;
  display: block;
}

.tool.ico {
  width: 24px;
  height: 24px;
}

.tool.on {
  background: linear-gradient(#fde1b8, #f7b268);
  box-shadow: 0 0 0 1px #b9b4a8;
}

.grip {
  width: 2px;
  height: 22px;
  background: repeating-linear-gradient(#222 0 2px, transparent 2px 9px);
}

.sep {
  width: 2px;
  height: 18px;
  background: #aca89e;
  border-right: 1px solid #f0ede6;
  box-sizing: border-box;
}

.caret {
  width: 6px;
  height: 3px;
  background: #222;
  clip-path: polygon(0 0, 100% 0, 50% 100%);
}

.main {
  flex: 1;
  display: flex;
  min-height: 0;
}

.side {
  width: 276px;
  flex: none;
  border-right: 1px solid #807d76;
  display: flex;
  flex-direction: column;
}

.tabs {
  height: 23px;
  flex: none;
  display: flex;
  align-items: flex-end;
  padding-left: 3px;
  font-size: 11.600px;
}

.tab {
  box-sizing: border-box;
  height: 21px;
  line-height: 23px;
  text-align: center;
  border: 1px solid #f1eee8;
  border-right-color: #8d8a83;
  border-bottom: 0;
  border-radius: 3px 3px 0 0;
  margin-right: 1px;
}

.tab-u {
  width: 50px;
}

.tab-m {
  width: 49px;
}

.tab-active {
  width: 53px;
  height: 23px;
  font-size: 13px;
  font-weight: 700;
  line-height: 24px;
  position: relative;
  background: #d4d0c8;
  letter-spacing: 0.2px;
}

.close {
  margin: 0 0 16px auto;
  padding-right: 4px;
  font-size: 10px;
  color: #444;
}

.panel {
  width: 266px;
  margin-left: 3px;
  flex: 1;
  min-height: 0;
  border-top: 1px solid #f1eee8;
  border-left: 1px solid #f1eee8;
  border-right: 1px solid #8d8a83;
  box-sizing: border-box;
  display: flex;
  flex-direction: column;
}

.panel-bar {
  height: 24px;
  flex: none;
}

.panel-bar.second {
  height: 25px;
  margin-bottom: 7px;
}

.browser {
  height: 415px;
  flex: none;
  display: flex;
}

.tree {
  position: relative;
  width: 247px;
  flex: none;
  background: #fff;
  overflow: hidden;
}

.tree-head {
  height: 14.300px;
  display: flex;
  background: linear-gradient(#ffffff, #e9e7e2);
  border-bottom: 1px solid #d8d6d0;
  box-sizing: border-box;
  line-height: 14px;
}

.h-name {
  flex: 1;
  padding-left: 2px;
}

.h-id {
  width: 24px;
  background: linear-gradient(#e8f2fa, #cfe4f4);
  text-align: right;
  padding-right: 2px;
  box-sizing: border-box;
  border-left: 1px solid #d0d0cc;
  border-right: 1px solid #d0d0cc;
}

.h-col {
  width: 20px;
  display: flex;
  align-items: center;
  padding-left: 4px;
  box-sizing: border-box;
  border-right: 1px solid #d0d0cc;
}

.wheel {
  width: 11px;
  height: 11px;
  border-radius: 50%;
  background: conic-gradient(#f00, #ff0, #0f0, #0ff, #00f, #f0f, #f00);
}

.h-end {
  width: 16px;
}

.row {
  height: 15.360px;
  display: flex;
  align-items: stretch;
  box-sizing: border-box;
  border-bottom: 1px solid #e9f2fb;
}

.c {
  width: 16.360px;
  flex: none;
  display: flex;
  align-items: center;
  justify-content: center;
}

.c-line {
  background: repeating-linear-gradient(#8a8a8a 0 1px, transparent 1px 2px) center / 1px 120% no-repeat;
}

.c-elbow {
  background:
    repeating-linear-gradient(#8a8a8a 0 1px, transparent 1px 2px) center top / 1px 50% no-repeat,
    repeating-linear-gradient(90deg, #8a8a8a 0 1px, transparent 1px 2px) right center / 50% 1px no-repeat;
}

.exp {
  width: 9px;
  height: 9px;
  display: block;
}

.node-ico {
  width: 18px;
  height: 18px;
  flex: none;
}

.body {
  flex: 1;
  min-width: 0;
  display: flex;
  align-items: center;
  margin-right: 15px;
}

.body.sel {
  background: linear-gradient(#fbfdff, #e4eef8);
  box-shadow: inset 0 0 0 1px #c3d8ee;
}

.label {
  flex: 1;
  padding: 1px 0 0 5px;
  white-space: nowrap;
  line-height: 14px;
}

.id {
  padding-top: 1px;
  text-align: right;
  white-space: nowrap;
  font-size: 12px;
}

.sw-cell {
  width: 24px;
  flex: none;
  display: flex;
  justify-content: center;
}

.swatch {
  box-sizing: border-box;
  width: 10px;
  height: 10px;
  border: 1px solid #222;
}

.callout {
  position: absolute;
  left: 46px;
  top: 90px;
  width: 134px;
  height: 46px;
  box-sizing: border-box;
  border: 2px solid #f00e0e;
}

.scroll {
  width: 16px;
  flex: none;
  margin-top: -2px;
  display: flex;
  flex-direction: column;
}

.sb-btn {
  height: 15px;
  flex: none;
  box-sizing: border-box;
  background: #d4d0c8;
  border: 1px solid;
  border-color: #f4f1ea #555 #555 #f4f1ea;
  display: flex;
  align-items: center;
  justify-content: center;
}

.sb-track {
  flex: 1;
  background: #e6e4de;
}

.sb-track.first {
  flex: none;
  height: 24px;
}

.sb-thumb {
  height: 220px;
  flex: none;
  box-sizing: border-box;
  background: #d4d0c8;
  border: 1px solid;
  border-color: #f4f1ea #555 #555 #f4f1ea;
}

.tri {
  display: block;
  width: 0;
  height: 0;
  border-left: 4px solid transparent;
  border-right: 4px solid transparent;
  border-top: 4px solid #111;
}

.tri.up {
  border-top: 0;
  border-bottom: 4px solid #111;
}

.tri.left {
  border: 0;
  border-top: 5px solid transparent;
  border-bottom: 5px solid transparent;
  border-right: 6px solid #111;
}

.grab {
  flex: 1;
  display: flex;
  justify-content: flex-end;
  padding-right: 10px;
  align-items: flex-end;
  border-bottom: 2px solid #8d8a83;
}

.tri.small {
  border-left-width: 3px;
  border-right-width: 3px;
  border-bottom-width: 3px;
  margin-bottom: 1px;
}

.work {
  flex: 1;
  min-width: 0;
  display: flex;
  flex-direction: column;
}

.upper {
  height: 316px;
  flex: none;
  display: flex;
}

.v-bar {
  width: 39px;
  flex: none;
  display: flex;
  flex-direction: column;
  align-items: center;
  border-left: 1px solid #f1eee8;
  box-sizing: border-box;
  padding-right: 1px;
  height: 316px;
}

.h-grip {
  flex: none;
  width: 20px;
  height: 2px;
  margin-top: 3px;
  margin-bottom: 3px;
  background: repeating-linear-gradient(90deg, #222 0 2px, transparent 2px 7px);
}

.v-bar .tool.ico {
  width: 24px;
  height: 24px;
}

.v-bar .framed {
  box-shadow: 0 0 0 1px #a5a196;
}

.view {
  width: 542px;
  flex: none;
  background: linear-gradient(#2e5880, #929aa3);
}

.scene {
  display: block;
}

.ax {
  font: 700 7.500px "Liberation Sans", Arial, sans-serif;
  fill: #333;
}

.tiny {
  font: 7px "Liberation Sans", Arial, sans-serif;
  fill: #333;
}

.tiny.b {
  font-weight: 700;
}

.num {
  font: 700 8px "Liberation Sans", Arial, sans-serif;
  fill: #444;
  letter-spacing: 0.4px;
}

.abc {
  font: 700 7.500px "Liberation Sans", Arial, sans-serif;
  fill: #555;
}

.tri-l {
  font: 10px "Liberation Sans", Arial, sans-serif;
  fill: #dfe1e4;
}

.lower {
  flex: 1;
  min-height: 0;
  display: flex;
  flex-direction: column;
  border-bottom: 2px solid #8d8a83;
}

.low-bar {
  height: 26px;
  flex: none;
  margin-top: 1px;
}

.style-bar {
  height: 28px;
  flex: none;
}

.style-grip {
  margin-left: 7px;
  margin-right: 4px;
}

.select {
  box-sizing: border-box;
  height: 22px;
  flex: none;
  background: #fff;
  display: flex;
  align-items: center;
  padding-left: 1px;
}

.sel-auto {
  width: 93px;
  margin-left: -1px;
}

.sel-comp {
  width: 99px;
  margin-left: 5px;
}

.sel-ico {
  width: 20px;
  height: 20px;
  flex: none;
}

.sel-text {
  flex: 1;
  padding-left: 1px;
  font-size: 11.800px;
}

.sel-btn {
  width: 13px;
  height: 22px;
  flex: none;
  background: #d4d0c8;
  display: flex;
  align-items: center;
  justify-content: center;
}

.forms {
  flex: 1;
  min-height: 0;
  display: flex;
  justify-content: space-between;
  padding: 6px 12px 3px 3px;
}

.form {
  width: 205px;
}

.f-row {
  display: flex;
  height: 17px;
  align-items: stretch;
}

.btn {
  box-sizing: border-box;
  padding: 0;
  background: #d4d0c8;
  border: 2px solid;
  border-color: #eeebe4 #3c3c3c #3c3c3c #eeebe4;
  font: 11.500px "Liberation Sans", Arial, sans-serif;
  color: #262626;
  display: flex;
  align-items: center;
  justify-content: center;
  flex: none;
}

.w-name {
  width: 101px;
}

.w-card {
  width: 110px;
  margin-left: 1px;
}

.w-type {
  width: 102px;
}

.arrow {
  width: 16px;
}

.field {
  box-sizing: border-box;
  background: #fff;
  border: 2px solid;
  border-color: #3c3c3c #eeebe4 #eeebe4 #3c3c3c;
  padding-left: 2px;
  line-height: 12px;
  font-size: 12px;
  letter-spacing: 0.3px;
  white-space: nowrap;
}

.w-f1 {
  width: 102px;
  margin-left: 1px;
}

.w-f2 {
  width: 77px;
}

.f-label {
  width: 51px;
  flex: none;
  padding-left: 9px;
  box-sizing: border-box;
  line-height: 16px;
  white-space: nowrap;
  word-spacing: -1px;
}

.nodes {
  width: 85px;
  flex: none;
  box-sizing: border-box;
  background: #e8e25c;
  border: 2px solid #12e6ee;
  border-right-width: 1px;
  text-align: center;
  line-height: 13px;
}

.skip {
  width: 17px;
  gap: 1px;
  border-color: #3c3c3c #3c3c3c #3c3c3c #d4d0c8;
}

.bar-l {
  width: 2px;
  height: 10px;
  background: #111;
}

.formula {
  display: flex;
  align-items: center;
  gap: 2px;
  margin: 20px 0 0 71px;
}

.check {
  box-sizing: border-box;
  width: 12px;
  height: 12px;
  background: #fff;
  border: 1px solid;
  border-color: #444 #eeebe4 #eeebe4 #444;
}

.actions {
  width: 45px;
  display: flex;
  flex-direction: column;
}

.act {
  box-sizing: border-box;
  height: 17px;
  flex: none;
  padding: 0 2px 0 0;
  border: 1px solid;
  border-color: #9bd39b #1c3a1c #1c3a1c #9bd39b;
  font: 11.500px "Liberation Sans", Arial, sans-serif;
  color: #20301f;
  text-align: right;
  white-space: nowrap;
  overflow: hidden;
}

.green {
  background: #5cbc62;
}

.create {
  padding: 0;
}

.create span {
  display: block;
  box-sizing: border-box;
  height: 15px;
  line-height: 12px;
  padding-right: 1px;
  border: 1px solid #14331a;
}

.clip {
  text-align: left;
  padding-left: 1px;
}

.blue {
  background: #6478d6;
  color: #10143a;
  border-color: #a3aeea #1c2040 #1c2040 #a3aeea;
}

.red {
  background: #c45c5c;
  color: #2a1010;
  margin-top: auto;
  border-color: #e0a0a0 #401c1c #401c1c #e0a0a0;
}

.caption {
  margin: 9px 0 0;
  padding-left: 188px;
  font: 21px/24px Lato, "Open Sans", sans-serif;
  color: #000;
  white-space: nowrap;
}
</style>
